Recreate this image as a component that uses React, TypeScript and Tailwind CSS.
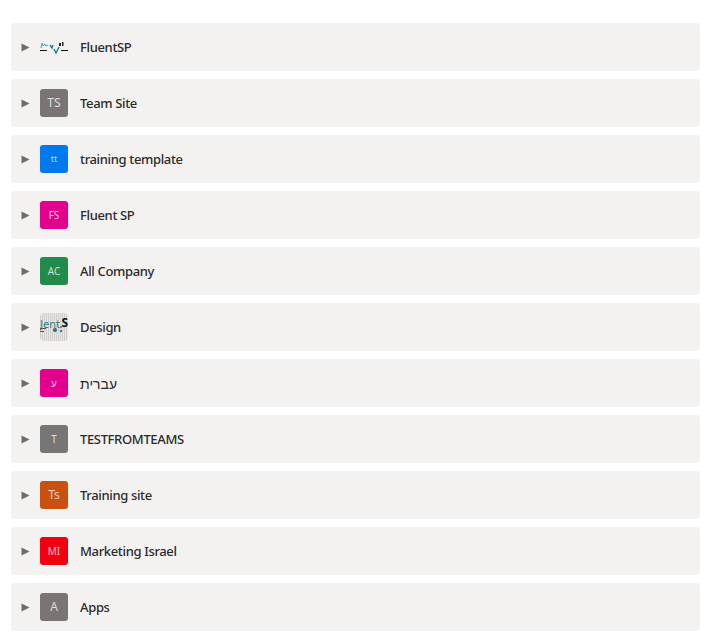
const sites = [
  { name: "FluentSP", logo: "fluent" },
  { name: "Team Site", initials: "TS", color: "bg-[#7a7574]", size: "text-[12px]" },
  { name: "training template", initials: "tt", color: "bg-[#0078f0]", size: "text-[9px]" },
  { name: "Fluent SP", initials: "FS", color: "bg-[#e3008c]", size: "text-[10px]" },
  { name: "All Company", initials: "AC", color: "bg-[#218b4c]", size: "text-[10px]" },
  { name: "Design", logo: "design" },
  { name: "עברית", initials: "ע", color: "bg-[#e3008c]", size: "text-[10px]", rtl: true },
  { name: "TESTFROMTEAMS", initials: "T", color: "bg-[#767676]", size: "text-[10px]" },
  { name: "Training site", initials: "Ts", color: "bg-[#ca5010]", size: "text-[12px]" },
  { name: "Marketing Israel", initials: "MI", color: "bg-[#f00011]", size: "text-[10px]" },
  { name: "Apps", initials: "A", color: "bg-[#7a7574]", size: "text-[12px]" },
];

function FluentLogo() {
  return (
    <svg width="28" height="28" viewBox="0 0 28 28" className="shrink-0">
      <path d="M0 17.5h7M21 17.5h7" stroke="#111" strokeWidth="1.2" />
      <path d="M1 15l1-5 1 3 2-2 1 2 2-1" stroke="#35b0b8" strokeWidth="1" fill="none" />
      <path d="M10 12l2 3 1-3M14 16l2 4 3-6" stroke="#1f7f8a" strokeWidth="1.4" fill="none" />
      <path d="M19 10h2v3h-2zM22 9h1.5v4H22z" fill="#222" />
    </svg>
  );
}

function DesignLogo() {
  return (
    <div className="relative w-7 h-7 shrink-0 overflow-hidden rounded bg-[repeating-linear-gradient(90deg,#cfcfcd_0px,#cfcfcd_1px,#e8e7e5_1px,#e8e7e5_2px)]">
      <span className="absolute left-0 top-[4px] text-[11px] leading-[14px] text-[#2f7d86] font-['Noto_Sans',sans-serif]">Jent</span>
      <span className="absolute right-0 top-[2px] text-[12px] leading-[16px] font-bold text-[#111] font-['Noto_Sans',sans-serif]">S</span>
      <svg width="28" height="28" viewBox="0 0 28 28" className="absolute left-0 top-0">
        <path d="M0 15.5h6M0 18.5h4" stroke="#555" strokeWidth="1" />
        <circle cx="15" cy="17" r="2" fill="#2f6f78" />
        <circle cx="21" cy="18" r="1.3" fill="#3a8a94" />
        <circle cx="21" cy="14" r="0.8" fill="#222" />
      </svg>
    </div>
  );
}

export default function App() {
  return (
    <div className="w-[711px] h-[644px] bg-white pt-[23px] pl-[11px] font-['Noto_Sans',sans-serif]">
      <div className="flex flex-col gap-2 w-[689px]">
        {sites.map((site) => (
          <div key={site.name} className="flex items-center h-12 rounded bg-[#f3f2f1] pl-[10px]">
            <svg width="9" height="9" viewBox="0 0 9 9" className="shrink-0 mr-[10px]">
              <path d="M0.5 0.5L8.5 4.5L0.5 8.5Z" fill="#6f6d6c" />
            </svg>
            {site.logo === "fluent" && <FluentLogo />}
            {site.logo === "design" && <DesignLogo />}
            {site.initials && (
              <div className={`flex items-center justify-center w-7 h-7 shrink-0 rounded-[3px] text-white/75 ${site.size} ${site.color}`}>
                {site.initials}
              </div>
            )}
            <span className={`ml-3 mt-px font-medium text-[#2b2a29] ${site.rtl ? "text-[14px]" : "text-[13px] tracking-[-0.35px]"}`}>
              {site.name}
            </span>
          </div>
        ))}
      </div>
    </div>
  );
}
